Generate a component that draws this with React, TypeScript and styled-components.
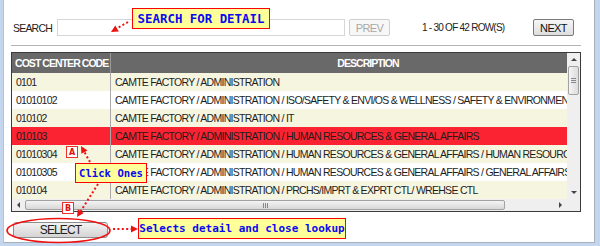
import React from 'react';
import styled, { createGlobalStyle } from 'styled-components';

const GlobalStyle = createGlobalStyle`
    html, body {
        margin: 0;
        padding: 0;
        background: #c3d6ee;
    }
    * {
        box-sizing: border-box;
    }
`;

const uiFont = `'Liberation Sans', Arial, sans-serif`;

interface Row {
    code: string;
    desc: string;
    selected?: boolean;
}

const rows: Row[] = [
    { code: '0101', desc: 'CAMTE FACTORY / ADMINISTRATION' },
    { code: '01010102', desc: 'CAMTE FACTORY / ADMINISTRATION / ISO/SAFETY & ENVI/OS & WELLNESS / SAFETY & ENVIRONMENT' },
    { code: '010102', desc: 'CAMTE FACTORY / ADMINISTRATION / IT' },
    { code: '010103', desc: 'CAMTE FACTORY / ADMINISTRATION / HUMAN RESOURCES & GENERAL AFFAIRS', selected: true },
    { code: '01010304', desc: 'CAMTE FACTORY / ADMINISTRATION / HUMAN RESOURCES & GENERAL AFFAIRS / HUMAN RESOURCES' },
    { code: '01010305', desc: 'CAMTE FACTORY / ADMINISTRATION / HUMAN RESOURCES & GENERAL AFFAIRS / GENERAL AFFAIRS' },
    { code: '010104', desc: 'CAMTE FACTORY / ADMINISTRATION / PRCHS/IMPRT & EXPRT CTL/ WREHSE CTL' },
];

// dotted red pointer, head drawn at (x2, y2)
const Pointer = ({ x1, y1, x2, y2 }: { x1: number; y1: number; x2: number; y2: number }) => {
    const a = Math.atan2(y2 - y1, x2 - x1);
    const len = 7;
    const w = 3.5;
    const bx = x2 - Math.cos(a) * len;
    const by = y2 - Math.sin(a) * len;
    const px = -Math.sin(a) * w;
    const py = Math.cos(a) * w;
    return (
        <g>
            <line x1={x1} y1={y1} x2={bx} y2={by} stroke="#f01010" strokeWidth={2} strokeDasharray="2 2.4" />
            <polygon points={`${x2},${y2} ${bx + px},${by + py} ${bx - px},${by - py}`} fill="#f01010" />
        </g>
    );
};

const App = () => {
    return (
        <Frame>
            <GlobalStyle />
            <Panel>
                <Toolbar>
                    <Label>SEARCH</Label>
                    <SearchInput />
                    <Btn disabled>PREV</Btn>
                    <Count>1 - 30 OF 42 ROW(S)</Count>
                    <Btn $next>NEXT</Btn>
                </Toolbar>
                <Divider />
                <Grid>
                    <GridTop>
                        <TableArea>
                            <HeaderRow>
                                <HeadCell $w={99}>COST CENTER CODE</HeadCell>
                                <HeadCell $w={512} $center>
                                    DESCRIPTION
                                </HeadCell>
                            </HeaderRow>
                            {rows.map((r, i) => (
                                <DataRow key={r.code} $odd={i % 2 === 1} $selected={r.selected}>
                                    <Cell $w={99}>{r.code}</Cell>
                                    <Cell $w={512}>{r.desc}</Cell>
                                </DataRow>
                            ))}
                        </TableArea>
                        <VScroll>
                            <ScrollBtn $v>
                                <Tri $dir="up" />
                            </ScrollBtn>
                            <VTrack>
                                <VThumb>
                                    <Grip />
                                </VThumb>
                            </VTrack>
                            <ScrollBtn $v>
                                <Tri $dir="down" />
                            </ScrollBtn>
                        </VScroll>
                    </GridTop>
                    <GridBottom>
                        <HScroll>
                            <ScrollBtn>
                                <Tri $dir="left" />
                            </ScrollBtn>
                            <HThumb>
                                <HGrip />
                            </HThumb>
                            <HTrack />
                            <ScrollBtn>
                                <Tri $dir="right" />
                            </ScrollBtn>
                        </HScroll>
                        <Corner />
                    </GridBottom>
                </Grid>
                <Footer>
                    <SelectBtn>SELECT</SelectBtn>
                </Footer>
            </Panel>

            <Note $x={132} $y={8} $w={138} $h={21} $size={12.4}>
                SEARCH FOR DETAIL
            </Note>
            <Note $x={75} $y={163} $w={72} $h={20} $size={10.6}>
                Click Ones
            </Note>
            <Note $x={138} $y={218} $w={208} $h={21} $size={11}>
                Selects detail and close lookup
            </Note>
            <Badge $x={66} $y={146}>A</Badge>
            <Badge $x={62} $y={202}>B</Badge>

            <Overlay width={600} height={246}>
                <ellipse cx={58.5} cy={230.5} rx={51.5} ry={12} fill="none" stroke="#f01010" strokeWidth={1.6} />
                <Pointer x1={128} y1={22} x2={111} y2={32} />
                <Pointer x1={90} y1={162} x2={81} y2={146} />
                <Pointer x1={98} y1={184} x2={77} y2={217} />
                <Pointer x1={113} y1={229} x2={138} y2={229} />
            </Overlay>
        </Frame>
    );
};

const Frame = styled.div`
    position: relative;
    width: 600px;
    height: 246px;
    display: flex;
    padding: 0 5px 3px 3px;
    background: #c3d6ee;
    font-family: ${uiFont};
    font-size: 11px;
    color: #222;
`;

const Panel = styled.div`
    flex: 1;
    display: flex;
    flex-direction: column;
    background: #fff;
    border-left: 1px solid #b4c2d4;
    border-right: 1px solid #a6b1be;
    border-bottom: 1px solid #a6b1be;
    padding: 0 13px 0 7px;
`;

const Toolbar = styled.div`
    display: flex;
    align-items: center;
    height: 17px;
    margin-top: 19px;
`;

const Label = styled.span`
    width: 44px;
    margin-left: 2px;
    font-size: 10.5px;
    letter-spacing: -0.8px;
    color: #222;
`;

const SearchInput = styled.div`
    width: 288px;
    height: 17px;
    border: 1px solid #d6d6d6;
    background: #fff;
`;

const Btn = styled.button<{ $next?: boolean }>`
    height: 17px;
    width: 41px;
    margin-left: ${(p) => (p.$next ? 'auto' : '4px')};
    margin-right: ${(p) => (p.$next ? '7px' : '0')};
    padding: 0;
    font-family: ${uiFont};
    font-size: 11px;
    letter-spacing: -0.6px;
    border-radius: 2px;
    border: 1px solid ${(p) => (p.$next ? '#7a7a7a' : '#cfcfcf')};
    color: ${(p) => (p.$next ? '#111' : '#a8a8a8')};
    background: ${(p) => (p.$next ? 'linear-gradient(#f6f6f6, #dedede)' : '#f7f7f7')};
`;

const Count = styled.span`
    margin-left: 32px;
    font-size: 10px;
    letter-spacing: -0.75px;
    color: #222;
`;

const Divider = styled.div`
    height: 1px;
    margin-top: 9px;
    background: #b2b2b2;
`;

const Grid = styled.div`
    margin-top: 6px;
    height: 160px;
    border: 1px solid #3a3a3a;
    display: flex;
    flex-direction: column;
`;

const GridTop = styled.div`
    display: flex;
    height: 146px;
`;

const TableArea = styled.div`
    width: 555px;
    overflow: hidden;
    display: flex;
    flex-direction: column;
`;

const HeaderRow = styled.div`
    display: flex;
    height: 20px;
    background: #696969;
    flex: 0 0 auto;
`;

const HeadCell = styled.div<{ $w: number; $center?: boolean }>`
    flex: 0 0 ${(p) => p.$w}px;
    display: flex;
    align-items: center;
    justify-content: ${(p) => (p.$center ? 'center' : 'flex-start')};
    padding-left: 3px;
    color: #fff;
    font-weight: bold;
    font-size: 10.5px;
    letter-spacing: -0.95px;
    white-space: nowrap;
    overflow: hidden;
    border-right: 1px solid #9a9a9a;
`;

const DataRow = styled.div<{ $odd: boolean; $selected?: boolean }>`
    display: flex;
    height: 18px;
    flex: 0 0 auto;
    background: ${(p) => (p.$selected ? '#fb2331' : p.$odd ? '#ffffff' : '#f6f5df')};
`;

const Cell = styled.div`
    flex: 0 0 ${(p: { $w: number }) => p.$w}px;
    display: flex;
    align-items: center;
    padding-left: 4px;
    white-space: nowrap;
    overflow: hidden;
    color: #1e1e1e;
    font-size: 10.5px;
    letter-spacing: -0.72px;
    border-right: 1px solid #a8a8a8;
`;

const VScroll = styled.div`
    width: 13px;
    display: flex;
    flex-direction: column;
    background: #efefef;
`;

const ScrollBtn = styled.div<{ $v?: boolean }>`
    flex: 0 0 13px;
    height: ${(p) => (p.$v ? '13px' : '100%')};
    display: flex;
    align-items: center;
    justify-content: center;
    background: #efefef;
`;

const Tri = styled.div<{ $dir: 'up' | 'down' | 'left' | 'right' }>`
    width: 0;
    height: 0;
    border: 3px solid transparent;
    ${(p) =>
        p.$dir === 'up'
            ? 'border-bottom: 3px solid #444; border-top-width: 0;'
            : p.$dir === 'down'
              ? 'border-top: 3px solid #444; border-bottom-width: 0;'
              : p.$dir === 'left'
                ? 'border-right: 3px solid #444; border-left-width: 0;'
                : 'border-left: 3px solid #444; border-right-width: 0;'}
`;

const VTrack = styled.div`
    flex: 1;
    padding: 0 1px;
`;

const VThumb = styled.div`
    height: 29px;
    border: 1px solid #a2a2a2;
    border-radius: 2px;
    background: linear-gradient(90deg, #f4f4f4, #dcdcdc);
    display: flex;
    align-items: center;
    justify-content: center;
`;

const Grip = styled.div`
    width: 5px;
    height: 5px;
    border-top: 1px solid #888;
    border-bottom: 1px solid #888;
    background: linear-gradient(#888, #888) center / 100% 1px no-repeat;
`;

const GridBottom = styled.div`
    display: flex;
    flex: 1;
`;

const HScroll = styled.div`
    width: 555px;
    display: flex;
    background: #efefef;
`;

const HThumb = styled.div`
    width: 480px;
    margin: 1px 0;
    border: 1px solid #a2a2a2;
    border-radius: 2px;
    background: linear-gradient(#f4f4f4, #d8d8d8);
    display: flex;
    align-items: center;
    justify-content: center;
`;

const HGrip = styled.div`
    width: 5px;
    height: 5px;
    border-left: 1px solid #888;
    border-right: 1px solid #888;
    background: linear-gradient(#888, #888) center / 1px 100% no-repeat;
`;

const HTrack = styled.div`
    flex: 1;
`;

const Corner = styled.div`
    flex: 1;
    background: #efefef;
`;

const Footer = styled.div`
    display: flex;
    margin-top: 10px;
`;

const SelectBtn = styled.button`
    width: 95px;
    height: 16px;
    margin-left: 2px;
    padding: 0;
    border: 1px solid #8e8e8e;
    border-radius: 3px;
    background: linear-gradient(#f2f2f2, #d4d4d4);
    font-family: ${uiFont};
    font-size: 12px;
    letter-spacing: -0.9px;
    color: #222;
`;

const Note = styled.div<{ $x: number; $y: number; $w: number; $h: number; $size: number }>`
    position: absolute;
    left: ${(p) => p.$x}px;
    top: ${(p) => p.$y}px;
    width: ${(p) => p.$w}px;
    height: ${(p) => p.$h}px;
    display: flex;
    align-items: center;
    justify-content: center;
    background: #ffff99;
    border: 1px solid #f00;
    color: #0a0af0;
    font-family: 'DejaVu Sans Mono', monospace;
    font-weight: bold;
    font-size: ${(p) => p.$size}px;
    white-space: nowrap;
`;

const Badge = styled.div<{ $x: number; $y: number }>`
    position: absolute;
    left: ${(p) => p.$x}px;
    top: ${(p) => p.$y}px;
    width: 12px;
    height: 12px;
    display: flex;
    align-items: center;
    justify-content: center;
    background: #fff;
    border: 1px solid #f03030;
    color: #e01010;
    font-family: 'DejaVu Sans', sans-serif;
    font-weight: bold;
    font-size: 8px;
`;

const Overlay = styled.svg`
    position: absolute;
    left: 0;
    top: 0;
    pointer-events: none;
`;

export default App;
